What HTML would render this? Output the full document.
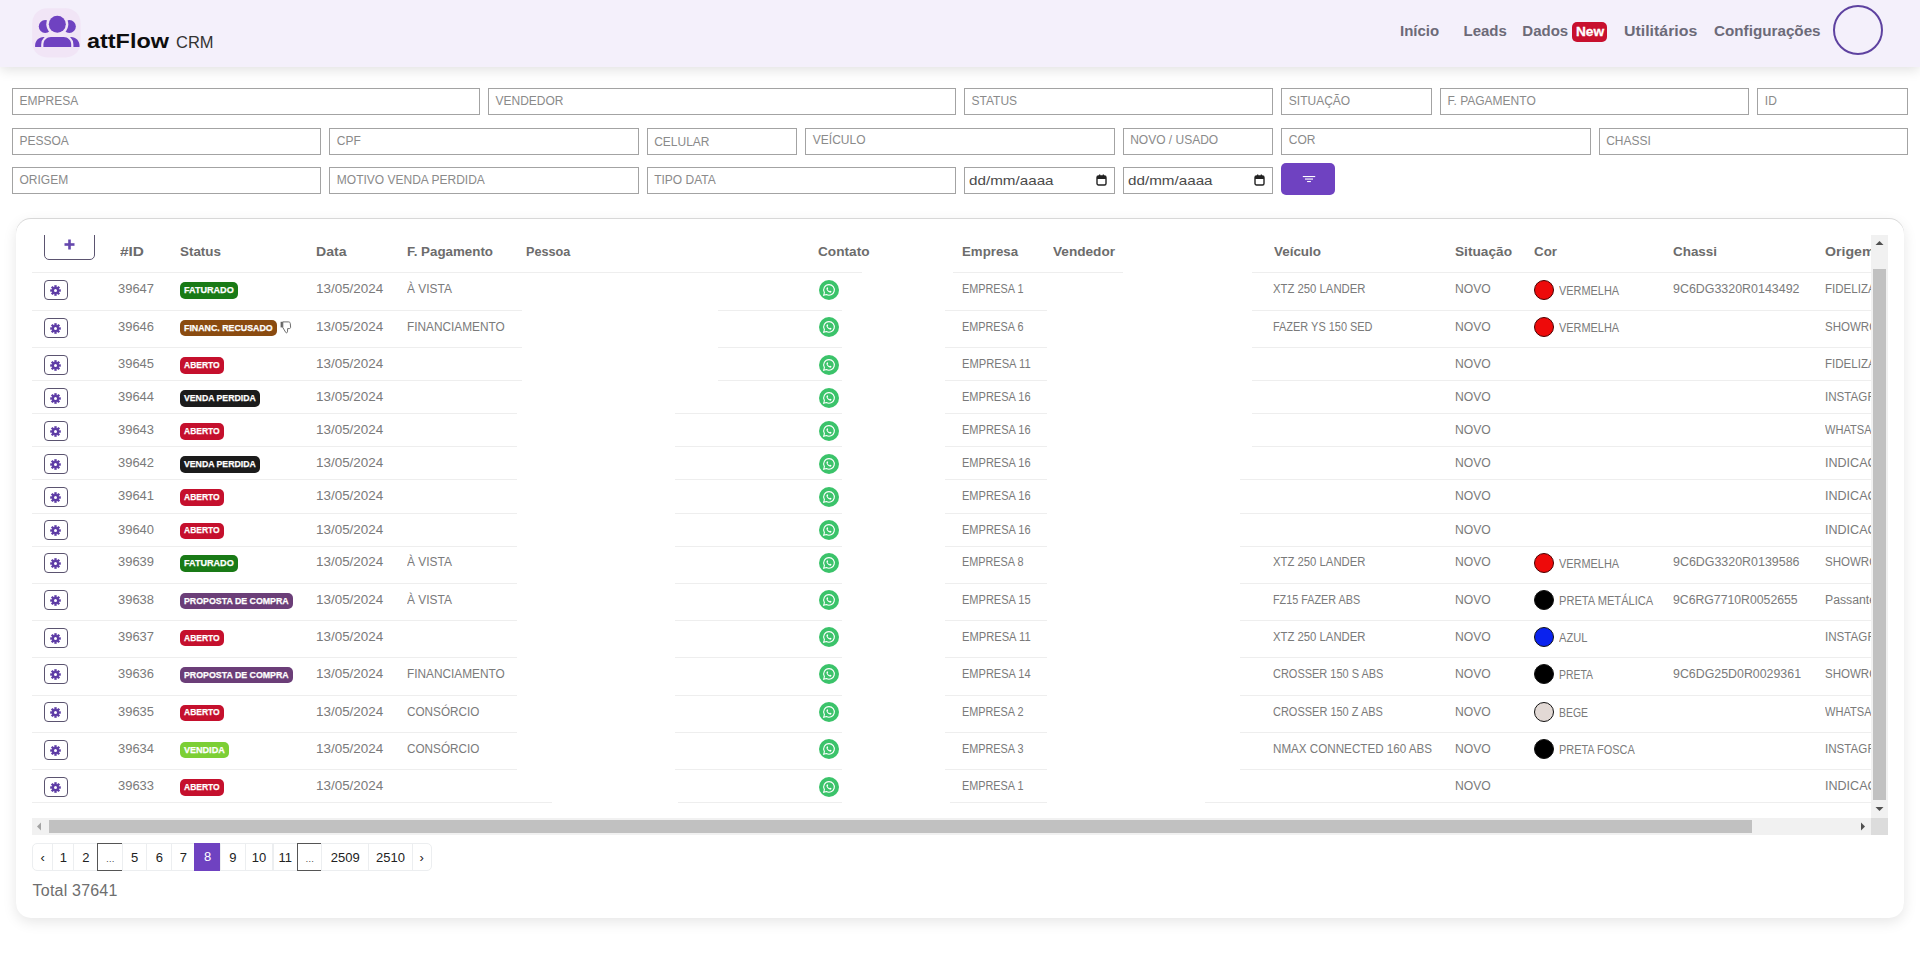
<!DOCTYPE html><html><head><meta charset="utf-8"><style>
*{box-sizing:border-box;margin:0;padding:0}
html,body{width:1920px;height:960px;overflow:hidden;background:#fff;font-family:"Liberation Sans", sans-serif;position:relative}
.t{position:absolute;white-space:nowrap;line-height:1}
.inp{position:absolute;border:1px solid #a3a3a3;background:#fff;height:27px}
.badge{position:absolute;height:17px;border-radius:4px;color:#fff;font-weight:bold;font-size:9px;line-height:17px;padding:0 5px;white-space:nowrap;letter-spacing:-0.2px}
.gear{position:absolute;width:24px;height:20px;border:1px solid #5b5470;border-radius:4px;background:#fff}
.wa{position:absolute;width:20px;height:20px;border-radius:50%;background:#3cc36b}
.dot{position:absolute;width:20px;height:20px;border-radius:50%;border:1px solid #222}
.pg{position:absolute;top:843px;height:28px;border:1px solid #eceef0;border-left:none;font-size:13px;color:#222;text-align:center;line-height:26px}
</style></head><body><div style="position:absolute;left:0px;top:0px;width:1920px;height:67px;background:#f4f0fb;box-shadow:0 3px 12px rgba(0,0,0,0.12)"></div>
<svg style="position:absolute;left:0;top:0" width="100" height="67" viewBox="0 0 100 67">
<rect x="32.2" y="8.2" width="48.4" height="49.3" rx="15" fill="#f1e5f6"/>
<g fill="#6f42c1"><circle cx="45.2" cy="26.45" r="6.45"/><circle cx="69.4" cy="26.45" r="6.45"/></g>
<circle cx="57.3" cy="24.35" r="11" fill="#f1e5f6"/>
<circle cx="57.3" cy="24.35" r="8.5" fill="#6f42c1"/>
<path d="M35.1 46.9 V45.5 C35.1 40.5 38.8 36.9 43.5 36.9 H71.1 C75.8 36.9 79.5 40.5 79.5 45.5 V46.9 Z" fill="#6f42c1"/>
<path d="M43.4 46.9 V44.5 C43.4 40.2 46.8 36.9 51 36.9 H63.6 C67.8 36.9 71.2 40.2 71.2 44.5 V46.9 Z" fill="none" stroke="#f1e5f6" stroke-width="4.4"/>
<path d="M43.4 46.9 V44.5 C43.4 40.2 46.8 36.9 51 36.9 H63.6 C67.8 36.9 71.2 40.2 71.2 44.5 V46.9 Z" fill="#6f42c1"/>
</svg>
<div class="t" style="left:87.20px;top:30.87px;font-size:20px;color:#0d0d0d;font-weight:bold;letter-spacing:0px;transform:scaleX(1.17);transform-origin:0 0;">attFlow</div>
<div class="t" style="left:175.50px;top:34.76px;font-size:16px;color:#333;font-weight:normal;letter-spacing:0px;transform:scaleX(1.03);transform-origin:0 0;">CRM</div>
<div class="t" style="left:1400.00px;top:23.30px;font-size:15px;color:#6c6a78;font-weight:bold;letter-spacing:0px;">Início</div>
<div class="t" style="left:1463.50px;top:23.30px;font-size:15px;color:#6c6a78;font-weight:bold;letter-spacing:0px;">Leads</div>
<div class="t" style="left:1522.30px;top:23.30px;font-size:15px;color:#6c6a78;font-weight:bold;letter-spacing:0px;">Dados</div>
<div style="position:absolute;left:1572px;top:22px;width:35px;height:19.5px;background:#c8102e;border-radius:5px"></div>
<div class="t" style="left:1575.50px;top:25.00px;font-size:13px;color:#fff;font-weight:bold;letter-spacing:0px;transform:scaleX(1.05);transform-origin:0 0;-webkit-text-stroke:0.3px #fff;">New</div>
<div class="t" style="left:1624.00px;top:23.30px;font-size:15px;color:#6c6a78;font-weight:bold;letter-spacing:0px;transform:scaleX(1.06);transform-origin:0 0;">Utilitários</div>
<div class="t" style="left:1713.50px;top:23.30px;font-size:15px;color:#6c6a78;font-weight:bold;letter-spacing:0px;transform:scaleX(1.015);transform-origin:0 0;">Configurações</div>
<div style="position:absolute;left:1833px;top:5px;width:50px;height:50px;border:2px solid #5e42a0;border-radius:50%"></div>
<div class="inp" style="left:12.00px;top:88px;width:468.00px"></div>
<div class="t" style="left:19.50px;top:94.84px;font-size:12px;color:#8a8a8a;font-weight:normal;letter-spacing:0px;">EMPRESA</div>
<div class="inp" style="left:488.00px;top:88px;width:468.00px"></div>
<div class="t" style="left:495.50px;top:94.84px;font-size:12px;color:#8a8a8a;font-weight:normal;letter-spacing:0px;">VENDEDOR</div>
<div class="inp" style="left:964.00px;top:88px;width:309.33px"></div>
<div class="t" style="left:971.50px;top:94.84px;font-size:12px;color:#8a8a8a;font-weight:normal;letter-spacing:0px;">STATUS</div>
<div class="inp" style="left:1281.33px;top:88px;width:150.67px"></div>
<div class="t" style="left:1288.83px;top:94.84px;font-size:12px;color:#8a8a8a;font-weight:normal;letter-spacing:0px;">SITUAÇÃO</div>
<div class="inp" style="left:1440.00px;top:88px;width:309.33px"></div>
<div class="t" style="left:1447.50px;top:94.84px;font-size:12px;color:#8a8a8a;font-weight:normal;letter-spacing:0px;">F. PAGAMENTO</div>
<div class="inp" style="left:1757.33px;top:88px;width:150.67px"></div>
<div class="t" style="left:1764.83px;top:95.34px;font-size:12px;color:#8a8a8a;font-weight:normal;letter-spacing:0px;">ID</div>
<div class="inp" style="left:12.00px;top:127.5px;width:309.33px"></div>
<div class="t" style="left:19.50px;top:135.34px;font-size:12px;color:#8a8a8a;font-weight:normal;letter-spacing:0px;">PESSOA</div>
<div class="inp" style="left:329.33px;top:127.5px;width:309.33px"></div>
<div class="t" style="left:336.83px;top:135.34px;font-size:12px;color:#8a8a8a;font-weight:normal;letter-spacing:0px;">CPF</div>
<div class="inp" style="left:646.67px;top:127.5px;width:150.67px"></div>
<div class="t" style="left:654.17px;top:135.84px;font-size:12px;color:#8a8a8a;font-weight:normal;letter-spacing:0px;">CELULAR</div>
<div class="inp" style="left:805.33px;top:127.5px;width:309.33px"></div>
<div class="t" style="left:812.83px;top:134.34px;font-size:12px;color:#8a8a8a;font-weight:normal;letter-spacing:0px;">VEÍCULO</div>
<div class="inp" style="left:1122.67px;top:127.5px;width:150.67px"></div>
<div class="t" style="left:1130.17px;top:134.34px;font-size:12px;color:#8a8a8a;font-weight:normal;letter-spacing:0px;">NOVO / USADO</div>
<div class="inp" style="left:1281.33px;top:127.5px;width:309.33px"></div>
<div class="t" style="left:1288.83px;top:134.34px;font-size:12px;color:#8a8a8a;font-weight:normal;letter-spacing:0px;">COR</div>
<div class="inp" style="left:1598.67px;top:127.5px;width:309.33px"></div>
<div class="t" style="left:1606.17px;top:135.34px;font-size:12px;color:#8a8a8a;font-weight:normal;letter-spacing:0px;">CHASSI</div>
<div class="inp" style="left:12.00px;top:167px;width:309.33px"></div>
<div class="t" style="left:19.50px;top:173.84px;font-size:12px;color:#8a8a8a;font-weight:normal;letter-spacing:0px;">ORIGEM</div>
<div class="inp" style="left:329.33px;top:167px;width:309.33px"></div>
<div class="t" style="left:336.83px;top:173.84px;font-size:12px;color:#8a8a8a;font-weight:normal;letter-spacing:0px;">MOTIVO VENDA PERDIDA</div>
<div class="inp" style="left:646.67px;top:167px;width:309.33px"></div>
<div class="t" style="left:654.17px;top:173.84px;font-size:12px;color:#8a8a8a;font-weight:normal;letter-spacing:0px;">TIPO DATA</div>
<div class="inp" style="left:964.00px;top:167px;width:150.67px"></div>
<div class="t" style="left:969.00px;top:173.80px;font-size:13px;color:#4a4a4a;font-weight:normal;letter-spacing:0px;transform:scaleX(1.17);transform-origin:0 0;">dd/mm/aaaa</div>
<svg style="position:absolute;left:1095.67px;top:174px" width="11" height="12" viewBox="0 0 11 12"><rect x="1" y="2" width="9" height="9" rx="1.5" fill="none" stroke="#222" stroke-width="1.4"/><rect x="1" y="2" width="9" height="3" fill="#222"/><rect x="3" y="0.5" width="1.3" height="2.5" fill="#222"/><rect x="6.7" y="0.5" width="1.3" height="2.5" fill="#222"/></svg>
<div class="inp" style="left:1122.67px;top:167px;width:150.67px"></div>
<div class="t" style="left:1127.67px;top:173.80px;font-size:13px;color:#4a4a4a;font-weight:normal;letter-spacing:0px;transform:scaleX(1.17);transform-origin:0 0;">dd/mm/aaaa</div>
<svg style="position:absolute;left:1254.33px;top:174px" width="11" height="12" viewBox="0 0 11 12"><rect x="1" y="2" width="9" height="9" rx="1.5" fill="none" stroke="#222" stroke-width="1.4"/><rect x="1" y="2" width="9" height="3" fill="#222"/><rect x="3" y="0.5" width="1.3" height="2.5" fill="#222"/><rect x="6.7" y="0.5" width="1.3" height="2.5" fill="#222"/></svg>
<div style="position:absolute;left:1281px;top:163px;width:54px;height:32px;background:#6f42c1;border-radius:5px"></div>
<svg style="position:absolute;left:1302px;top:175px" width="14" height="8" viewBox="0 0 14 8"><rect x="0.8" y="1" width="12.4" height="1.1" fill="#fff"/><rect x="3" y="3.5" width="8" height="1.1" fill="#fff"/><rect x="5.1" y="6" width="3.8" height="1.1" fill="#fff"/></svg>
<div style="position:absolute;left:16px;top:219px;width:1888px;height:699px;background:#fff;border-radius:15px;box-shadow:0 -1px 0 #d8d8d8, 0 4px 14px rgba(0,0,0,0.10)"></div>
<div style="position:absolute;left:32px;top:235px;width:1839px;height:583px;overflow:hidden">
<div style="position:absolute;left:12px;top:-8px;width:51px;height:33px;border:1px solid #5b5470;border-radius:5px"></div>
<svg style="position:absolute;left:31.5px;top:3.5px" width="11" height="11" viewBox="0 0 11 11"><rect x="0.5" y="4.2" width="10" height="2.6" fill="#6548ad"/><rect x="4.2" y="0.5" width="2.6" height="10" fill="#6548ad"/></svg>
<div class="t" style="left:87.80px;top:10.84px;font-size:12px;color:#6c6c6c;font-weight:bold;letter-spacing:0px;transform:scaleX(1.2852);transform-origin:0 0;">#ID</div>
<div class="t" style="left:147.60px;top:10.84px;font-size:12px;color:#6c6c6c;font-weight:bold;letter-spacing:0px;transform:scaleX(1.1152);transform-origin:0 0;">Status</div>
<div class="t" style="left:284.20px;top:10.84px;font-size:12px;color:#6c6c6c;font-weight:bold;letter-spacing:0px;transform:scaleX(1.1726);transform-origin:0 0;">Data</div>
<div class="t" style="left:374.50px;top:10.84px;font-size:12px;color:#6c6c6c;font-weight:bold;letter-spacing:0px;transform:scaleX(1.1118);transform-origin:0 0;">F. Pagamento</div>
<div class="t" style="left:493.70px;top:10.84px;font-size:12px;color:#6c6c6c;font-weight:bold;letter-spacing:0px;transform:scaleX(1.0540);transform-origin:0 0;">Pessoa</div>
<div class="t" style="left:786.00px;top:10.84px;font-size:12px;color:#6c6c6c;font-weight:bold;letter-spacing:0px;transform:scaleX(1.1363);transform-origin:0 0;">Contato</div>
<div class="t" style="left:929.50px;top:10.84px;font-size:12px;color:#6c6c6c;font-weight:bold;letter-spacing:0px;transform:scaleX(1.1046);transform-origin:0 0;">Empresa</div>
<div class="t" style="left:1020.50px;top:10.84px;font-size:12px;color:#6c6c6c;font-weight:bold;letter-spacing:0px;transform:scaleX(1.1338);transform-origin:0 0;">Vendedor</div>
<div class="t" style="left:1241.50px;top:10.84px;font-size:12px;color:#6c6c6c;font-weight:bold;letter-spacing:0px;transform:scaleX(1.1185);transform-origin:0 0;">Veículo</div>
<div class="t" style="left:1422.50px;top:10.84px;font-size:12px;color:#6c6c6c;font-weight:bold;letter-spacing:0px;transform:scaleX(1.1396);transform-origin:0 0;">Situação</div>
<div class="t" style="left:1501.50px;top:10.84px;font-size:12px;color:#6c6c6c;font-weight:bold;letter-spacing:0px;transform:scaleX(1.1129);transform-origin:0 0;">Cor</div>
<div class="t" style="left:1640.50px;top:10.84px;font-size:12px;color:#6c6c6c;font-weight:bold;letter-spacing:0px;transform:scaleX(1.1181);transform-origin:0 0;">Chassi</div>
<div class="t" style="left:1792.50px;top:10.84px;font-size:12px;color:#6c6c6c;font-weight:bold;letter-spacing:0px;transform:scaleX(1.1783);transform-origin:0 0;">Origem</div>
<div style="position:absolute;left:0px;top:37px;width:830px;height:1px;background:#eeeeee"></div>
<div style="position:absolute;left:921px;top:37px;width:170px;height:1px;background:#eeeeee"></div>
<div style="position:absolute;left:1220px;top:37px;width:619px;height:1px;background:#eeeeee"></div>
<div style="position:absolute;left:0px;top:75px;width:490px;height:1px;background:#eeeeee"></div>
<div style="position:absolute;left:686px;top:75px;width:124px;height:1px;background:#eeeeee"></div>
<div style="position:absolute;left:913px;top:75px;width:102px;height:1px;background:#eeeeee"></div>
<div style="position:absolute;left:1220px;top:75px;width:619px;height:1px;background:#eeeeee"></div>
<div style="position:absolute;left:0px;top:112px;width:490px;height:1px;background:#eeeeee"></div>
<div style="position:absolute;left:686px;top:112px;width:124px;height:1px;background:#eeeeee"></div>
<div style="position:absolute;left:913px;top:112px;width:102px;height:1px;background:#eeeeee"></div>
<div style="position:absolute;left:1220px;top:112px;width:619px;height:1px;background:#eeeeee"></div>
<div style="position:absolute;left:0px;top:145px;width:490px;height:1px;background:#eeeeee"></div>
<div style="position:absolute;left:686px;top:145px;width:124px;height:1px;background:#eeeeee"></div>
<div style="position:absolute;left:913px;top:145px;width:102px;height:1px;background:#eeeeee"></div>
<div style="position:absolute;left:1220px;top:145px;width:619px;height:1px;background:#eeeeee"></div>
<div style="position:absolute;left:0px;top:178px;width:485px;height:1px;background:#eeeeee"></div>
<div style="position:absolute;left:643px;top:178px;width:167px;height:1px;background:#eeeeee"></div>
<div style="position:absolute;left:913px;top:178px;width:102px;height:1px;background:#eeeeee"></div>
<div style="position:absolute;left:1220px;top:178px;width:619px;height:1px;background:#eeeeee"></div>
<div style="position:absolute;left:0px;top:211px;width:485px;height:1px;background:#eeeeee"></div>
<div style="position:absolute;left:643px;top:211px;width:167px;height:1px;background:#eeeeee"></div>
<div style="position:absolute;left:913px;top:211px;width:102px;height:1px;background:#eeeeee"></div>
<div style="position:absolute;left:1220px;top:211px;width:619px;height:1px;background:#eeeeee"></div>
<div style="position:absolute;left:0px;top:244px;width:485px;height:1px;background:#eeeeee"></div>
<div style="position:absolute;left:643px;top:244px;width:167px;height:1px;background:#eeeeee"></div>
<div style="position:absolute;left:913px;top:244px;width:102px;height:1px;background:#eeeeee"></div>
<div style="position:absolute;left:1208px;top:244px;width:631px;height:1px;background:#eeeeee"></div>
<div style="position:absolute;left:0px;top:278px;width:485px;height:1px;background:#eeeeee"></div>
<div style="position:absolute;left:643px;top:278px;width:167px;height:1px;background:#eeeeee"></div>
<div style="position:absolute;left:913px;top:278px;width:102px;height:1px;background:#eeeeee"></div>
<div style="position:absolute;left:1208px;top:278px;width:631px;height:1px;background:#eeeeee"></div>
<div style="position:absolute;left:0px;top:311px;width:485px;height:1px;background:#eeeeee"></div>
<div style="position:absolute;left:643px;top:311px;width:167px;height:1px;background:#eeeeee"></div>
<div style="position:absolute;left:913px;top:311px;width:102px;height:1px;background:#eeeeee"></div>
<div style="position:absolute;left:1208px;top:311px;width:631px;height:1px;background:#eeeeee"></div>
<div style="position:absolute;left:0px;top:348px;width:485px;height:1px;background:#eeeeee"></div>
<div style="position:absolute;left:643px;top:348px;width:167px;height:1px;background:#eeeeee"></div>
<div style="position:absolute;left:913px;top:348px;width:102px;height:1px;background:#eeeeee"></div>
<div style="position:absolute;left:1208px;top:348px;width:631px;height:1px;background:#eeeeee"></div>
<div style="position:absolute;left:0px;top:385px;width:485px;height:1px;background:#eeeeee"></div>
<div style="position:absolute;left:643px;top:385px;width:167px;height:1px;background:#eeeeee"></div>
<div style="position:absolute;left:913px;top:385px;width:102px;height:1px;background:#eeeeee"></div>
<div style="position:absolute;left:1208px;top:385px;width:631px;height:1px;background:#eeeeee"></div>
<div style="position:absolute;left:0px;top:422px;width:485px;height:1px;background:#eeeeee"></div>
<div style="position:absolute;left:643px;top:422px;width:167px;height:1px;background:#eeeeee"></div>
<div style="position:absolute;left:913px;top:422px;width:102px;height:1px;background:#eeeeee"></div>
<div style="position:absolute;left:1208px;top:422px;width:631px;height:1px;background:#eeeeee"></div>
<div style="position:absolute;left:0px;top:460px;width:485px;height:1px;background:#eeeeee"></div>
<div style="position:absolute;left:643px;top:460px;width:167px;height:1px;background:#eeeeee"></div>
<div style="position:absolute;left:913px;top:460px;width:102px;height:1px;background:#eeeeee"></div>
<div style="position:absolute;left:1208px;top:460px;width:631px;height:1px;background:#eeeeee"></div>
<div style="position:absolute;left:0px;top:497px;width:485px;height:1px;background:#eeeeee"></div>
<div style="position:absolute;left:643px;top:497px;width:167px;height:1px;background:#eeeeee"></div>
<div style="position:absolute;left:913px;top:497px;width:102px;height:1px;background:#eeeeee"></div>
<div style="position:absolute;left:1208px;top:497px;width:631px;height:1px;background:#eeeeee"></div>
<div style="position:absolute;left:0px;top:534px;width:485px;height:1px;background:#eeeeee"></div>
<div style="position:absolute;left:643px;top:534px;width:167px;height:1px;background:#eeeeee"></div>
<div style="position:absolute;left:913px;top:534px;width:102px;height:1px;background:#eeeeee"></div>
<div style="position:absolute;left:1208px;top:534px;width:631px;height:1px;background:#eeeeee"></div>
<div style="position:absolute;left:0px;top:567px;width:520px;height:1px;background:#eeeeee"></div>
<div style="position:absolute;left:646px;top:567px;width:164px;height:1px;background:#eeeeee"></div>
<div style="position:absolute;left:918px;top:567px;width:97px;height:1px;background:#eeeeee"></div>
<div style="position:absolute;left:1173px;top:567px;width:666px;height:1px;background:#eeeeee"></div>
<div style="position:absolute;left:12px;top:45px;width:24px;height:20px;border:1px solid #5b5470;border-radius:4px"></div>
<svg style="position:absolute;left:17.5px;top:49.5px" width="11" height="11" viewBox="-5.5 -5.5 11 11"><g fill="#5e3da6"><circle r="3.6"/><rect x="-1.2" y="-5.3" width="2.4" height="3" transform="rotate(0)"/><rect x="-1.2" y="-5.3" width="2.4" height="3" transform="rotate(45)"/><rect x="-1.2" y="-5.3" width="2.4" height="3" transform="rotate(90)"/><rect x="-1.2" y="-5.3" width="2.4" height="3" transform="rotate(135)"/><rect x="-1.2" y="-5.3" width="2.4" height="3" transform="rotate(180)"/><rect x="-1.2" y="-5.3" width="2.4" height="3" transform="rotate(225)"/><rect x="-1.2" y="-5.3" width="2.4" height="3" transform="rotate(270)"/><rect x="-1.2" y="-5.3" width="2.4" height="3" transform="rotate(315)"/></g><circle r="1.5" fill="#fff"/></svg>
<div class="t" style="left:86.40px;top:47.84px;font-size:12px;color:#7a7a7a;font-weight:normal;letter-spacing:0px;transform:scaleX(1.0800);transform-origin:0 0;">39647</div>
<div style="position:absolute;left:148px;top:47.3px;width:58px;height:16.5px;background:#197a16;border-radius:5px"></div>
<div class="t" style="left:152.30px;top:50.16px;font-size:9.5px;color:#fff;font-weight:bold;letter-spacing:0px;transform:scaleX(0.9545);transform-origin:0 0;-webkit-text-stroke:0.25px #fff;">FATURADO</div>
<div class="t" style="left:284.20px;top:47.84px;font-size:12px;color:#7a7a7a;font-weight:normal;letter-spacing:0px;transform:scaleX(1.1192);transform-origin:0 0;">13/05/2024</div>
<div class="t" style="left:374.50px;top:47.84px;font-size:12px;color:#7a7a7a;font-weight:normal;letter-spacing:0px;transform:scaleX(0.9940);transform-origin:0 0;">À VISTA</div>
<svg style="position:absolute;left:787px;top:44.80000000000001px" width="20" height="20" viewBox="0 0 20 20"><circle cx="10" cy="10" r="10" fill="#3bc36a"/><path d="M10 4.6a5.3 5.3 0 0 0-4.6 8l-.7 2.6 2.7-.7A5.3 5.3 0 1 0 10 4.6z" fill="none" stroke="#fff" stroke-width="1.1"/><path d="M8.1 7.3c.2-.1.5 0 .6.2l.4 1c.1.2 0 .4-.2.6l-.3.3c.4.8 1 1.4 1.8 1.8l.3-.3c.2-.2.4-.2.6-.1l1 .4c.2.1.3.4.2.6-.3.7-1 1-1.7.8-1.6-.5-2.8-1.7-3.3-3.3-.2-.7.1-1.4.6-2z" fill="#fff"/></svg>
<div class="t" style="left:929.50px;top:47.84px;font-size:12px;color:#7a7a7a;font-weight:normal;letter-spacing:0px;transform:scaleX(0.9040);transform-origin:0 0;">EMPRESA 1</div>
<div class="t" style="left:1241.00px;top:47.84px;font-size:12px;color:#7a7a7a;font-weight:normal;letter-spacing:0px;transform:scaleX(0.9433);transform-origin:0 0;">XTZ 250 LANDER</div>
<div class="t" style="left:1422.50px;top:47.84px;font-size:12px;color:#7a7a7a;font-weight:normal;letter-spacing:0px;transform:scaleX(1.0141);transform-origin:0 0;">NOVO</div>
<div style="position:absolute;left:1502px;top:44.8px;width:20px;height:20px;background:#ee0a0a;border:1px solid #4a0000;border-radius:50%"></div>
<div class="t" style="left:1527.00px;top:49.84px;font-size:12px;color:#7a7a7a;font-weight:normal;letter-spacing:0px;transform:scaleX(0.9102);transform-origin:0 0;">VERMELHA</div>
<div class="t" style="left:1640.50px;top:47.84px;font-size:12px;color:#7a7a7a;font-weight:normal;letter-spacing:0px;transform:scaleX(1.0357);transform-origin:0 0;">9C6DG3320R0143492</div>
<div class="t" style="left:1792.50px;top:47.84px;font-size:12px;color:#7a7a7a;font-weight:normal;letter-spacing:0px;transform:scaleX(0.9621);transform-origin:0 0;">FIDELIZAÇÃO</div>
<div style="position:absolute;left:12px;top:83px;width:24px;height:20px;border:1px solid #5b5470;border-radius:4px"></div>
<svg style="position:absolute;left:17.5px;top:87.5px" width="11" height="11" viewBox="-5.5 -5.5 11 11"><g fill="#5e3da6"><circle r="3.6"/><rect x="-1.2" y="-5.3" width="2.4" height="3" transform="rotate(0)"/><rect x="-1.2" y="-5.3" width="2.4" height="3" transform="rotate(45)"/><rect x="-1.2" y="-5.3" width="2.4" height="3" transform="rotate(90)"/><rect x="-1.2" y="-5.3" width="2.4" height="3" transform="rotate(135)"/><rect x="-1.2" y="-5.3" width="2.4" height="3" transform="rotate(180)"/><rect x="-1.2" y="-5.3" width="2.4" height="3" transform="rotate(225)"/><rect x="-1.2" y="-5.3" width="2.4" height="3" transform="rotate(270)"/><rect x="-1.2" y="-5.3" width="2.4" height="3" transform="rotate(315)"/></g><circle r="1.5" fill="#fff"/></svg>
<div class="t" style="left:86.40px;top:85.94px;font-size:12px;color:#7a7a7a;font-weight:normal;letter-spacing:0px;transform:scaleX(1.0800);transform-origin:0 0;">39646</div>
<div style="position:absolute;left:148px;top:84.8px;width:97px;height:16.5px;background:#8a4b10;border-radius:5px"></div>
<div class="t" style="left:152.30px;top:87.66px;font-size:9.5px;color:#fff;font-weight:bold;letter-spacing:0px;transform:scaleX(0.9285);transform-origin:0 0;-webkit-text-stroke:0.25px #fff;">FINANC. RECUSADO</div>
<svg style="position:absolute;left:248px;top:86px" width="12" height="13" viewBox="0 0 12 13"><rect x="0.6" y="0.8" width="2.2" height="5.6" fill="#666"/><path d="M2.8 0.9 H8.6 C9.6 0.9 10.3 1.6 10.3 2.6 L10.6 6.2 C10.6 7.1 10 7.6 9.1 7.6 H7.6 L7.5 10.8 C7.4 11.7 6.5 12.1 5.8 11.5 L2.8 6.5 Z" fill="none" stroke="#666" stroke-width="0.95" stroke-linejoin="round"/></svg>
<div class="t" style="left:284.20px;top:85.94px;font-size:12px;color:#7a7a7a;font-weight:normal;letter-spacing:0px;transform:scaleX(1.1192);transform-origin:0 0;">13/05/2024</div>
<div class="t" style="left:374.50px;top:85.94px;font-size:12px;color:#7a7a7a;font-weight:normal;letter-spacing:0px;transform:scaleX(0.9859);transform-origin:0 0;">FINANCIAMENTO</div>
<svg style="position:absolute;left:787px;top:82.30000000000001px" width="20" height="20" viewBox="0 0 20 20"><circle cx="10" cy="10" r="10" fill="#3bc36a"/><path d="M10 4.6a5.3 5.3 0 0 0-4.6 8l-.7 2.6 2.7-.7A5.3 5.3 0 1 0 10 4.6z" fill="none" stroke="#fff" stroke-width="1.1"/><path d="M8.1 7.3c.2-.1.5 0 .6.2l.4 1c.1.2 0 .4-.2.6l-.3.3c.4.8 1 1.4 1.8 1.8l.3-.3c.2-.2.4-.2.6-.1l1 .4c.2.1.3.4.2.6-.3.7-1 1-1.7.8-1.6-.5-2.8-1.7-3.3-3.3-.2-.7.1-1.4.6-2z" fill="#fff"/></svg>
<div class="t" style="left:929.50px;top:85.94px;font-size:12px;color:#7a7a7a;font-weight:normal;letter-spacing:0px;transform:scaleX(0.9040);transform-origin:0 0;">EMPRESA 6</div>
<div class="t" style="left:1241.00px;top:85.94px;font-size:12px;color:#7a7a7a;font-weight:normal;letter-spacing:0px;transform:scaleX(0.9114);transform-origin:0 0;">FAZER YS 150 SED</div>
<div class="t" style="left:1422.50px;top:85.94px;font-size:12px;color:#7a7a7a;font-weight:normal;letter-spacing:0px;transform:scaleX(1.0141);transform-origin:0 0;">NOVO</div>
<div style="position:absolute;left:1502px;top:82.3px;width:20px;height:20px;background:#ee0a0a;border:1px solid #4a0000;border-radius:50%"></div>
<div class="t" style="left:1527.00px;top:87.34px;font-size:12px;color:#7a7a7a;font-weight:normal;letter-spacing:0px;transform:scaleX(0.9102);transform-origin:0 0;">VERMELHA</div>
<div class="t" style="left:1792.50px;top:85.94px;font-size:12px;color:#7a7a7a;font-weight:normal;letter-spacing:0px;transform:scaleX(0.9609);transform-origin:0 0;">SHOWROOM</div>
<div style="position:absolute;left:12px;top:120px;width:24px;height:20px;border:1px solid #5b5470;border-radius:4px"></div>
<svg style="position:absolute;left:17.5px;top:124.5px" width="11" height="11" viewBox="-5.5 -5.5 11 11"><g fill="#5e3da6"><circle r="3.6"/><rect x="-1.2" y="-5.3" width="2.4" height="3" transform="rotate(0)"/><rect x="-1.2" y="-5.3" width="2.4" height="3" transform="rotate(45)"/><rect x="-1.2" y="-5.3" width="2.4" height="3" transform="rotate(90)"/><rect x="-1.2" y="-5.3" width="2.4" height="3" transform="rotate(135)"/><rect x="-1.2" y="-5.3" width="2.4" height="3" transform="rotate(180)"/><rect x="-1.2" y="-5.3" width="2.4" height="3" transform="rotate(225)"/><rect x="-1.2" y="-5.3" width="2.4" height="3" transform="rotate(270)"/><rect x="-1.2" y="-5.3" width="2.4" height="3" transform="rotate(315)"/></g><circle r="1.5" fill="#fff"/></svg>
<div class="t" style="left:86.40px;top:123.24px;font-size:12px;color:#7a7a7a;font-weight:normal;letter-spacing:0px;transform:scaleX(1.0800);transform-origin:0 0;">39645</div>
<div style="position:absolute;left:148px;top:122.1px;width:44px;height:16.5px;background:#c5102d;border-radius:5px"></div>
<div class="t" style="left:152.30px;top:124.96px;font-size:9.5px;color:#fff;font-weight:bold;letter-spacing:0px;transform:scaleX(0.8938);transform-origin:0 0;-webkit-text-stroke:0.25px #fff;">ABERTO</div>
<div class="t" style="left:284.20px;top:123.24px;font-size:12px;color:#7a7a7a;font-weight:normal;letter-spacing:0px;transform:scaleX(1.1192);transform-origin:0 0;">13/05/2024</div>
<svg style="position:absolute;left:787px;top:119.60000000000002px" width="20" height="20" viewBox="0 0 20 20"><circle cx="10" cy="10" r="10" fill="#3bc36a"/><path d="M10 4.6a5.3 5.3 0 0 0-4.6 8l-.7 2.6 2.7-.7A5.3 5.3 0 1 0 10 4.6z" fill="none" stroke="#fff" stroke-width="1.1"/><path d="M8.1 7.3c.2-.1.5 0 .6.2l.4 1c.1.2 0 .4-.2.6l-.3.3c.4.8 1 1.4 1.8 1.8l.3-.3c.2-.2.4-.2.6-.1l1 .4c.2.1.3.4.2.6-.3.7-1 1-1.7.8-1.6-.5-2.8-1.7-3.3-3.3-.2-.7.1-1.4.6-2z" fill="#fff"/></svg>
<div class="t" style="left:929.50px;top:123.24px;font-size:12px;color:#7a7a7a;font-weight:normal;letter-spacing:0px;transform:scaleX(0.9295);transform-origin:0 0;">EMPRESA 11</div>
<div class="t" style="left:1422.50px;top:123.24px;font-size:12px;color:#7a7a7a;font-weight:normal;letter-spacing:0px;transform:scaleX(1.0141);transform-origin:0 0;">NOVO</div>
<div class="t" style="left:1792.50px;top:123.24px;font-size:12px;color:#7a7a7a;font-weight:normal;letter-spacing:0px;transform:scaleX(0.9621);transform-origin:0 0;">FIDELIZAÇÃO</div>
<div style="position:absolute;left:12px;top:153px;width:24px;height:20px;border:1px solid #5b5470;border-radius:4px"></div>
<svg style="position:absolute;left:17.5px;top:157.5px" width="11" height="11" viewBox="-5.5 -5.5 11 11"><g fill="#5e3da6"><circle r="3.6"/><rect x="-1.2" y="-5.3" width="2.4" height="3" transform="rotate(0)"/><rect x="-1.2" y="-5.3" width="2.4" height="3" transform="rotate(45)"/><rect x="-1.2" y="-5.3" width="2.4" height="3" transform="rotate(90)"/><rect x="-1.2" y="-5.3" width="2.4" height="3" transform="rotate(135)"/><rect x="-1.2" y="-5.3" width="2.4" height="3" transform="rotate(180)"/><rect x="-1.2" y="-5.3" width="2.4" height="3" transform="rotate(225)"/><rect x="-1.2" y="-5.3" width="2.4" height="3" transform="rotate(270)"/><rect x="-1.2" y="-5.3" width="2.4" height="3" transform="rotate(315)"/></g><circle r="1.5" fill="#fff"/></svg>
<div class="t" style="left:86.40px;top:156.44px;font-size:12px;color:#7a7a7a;font-weight:normal;letter-spacing:0px;transform:scaleX(1.0800);transform-origin:0 0;">39644</div>
<div style="position:absolute;left:148px;top:155.3px;width:80px;height:16.5px;background:#1b1b1b;border-radius:5px"></div>
<div class="t" style="left:152.30px;top:158.16px;font-size:9.5px;color:#fff;font-weight:bold;letter-spacing:0px;transform:scaleX(0.9157);transform-origin:0 0;-webkit-text-stroke:0.25px #fff;">VENDA PERDIDA</div>
<div class="t" style="left:284.20px;top:156.44px;font-size:12px;color:#7a7a7a;font-weight:normal;letter-spacing:0px;transform:scaleX(1.1192);transform-origin:0 0;">13/05/2024</div>
<svg style="position:absolute;left:787px;top:152.8px" width="20" height="20" viewBox="0 0 20 20"><circle cx="10" cy="10" r="10" fill="#3bc36a"/><path d="M10 4.6a5.3 5.3 0 0 0-4.6 8l-.7 2.6 2.7-.7A5.3 5.3 0 1 0 10 4.6z" fill="none" stroke="#fff" stroke-width="1.1"/><path d="M8.1 7.3c.2-.1.5 0 .6.2l.4 1c.1.2 0 .4-.2.6l-.3.3c.4.8 1 1.4 1.8 1.8l.3-.3c.2-.2.4-.2.6-.1l1 .4c.2.1.3.4.2.6-.3.7-1 1-1.7.8-1.6-.5-2.8-1.7-3.3-3.3-.2-.7.1-1.4.6-2z" fill="#fff"/></svg>
<div class="t" style="left:929.50px;top:156.44px;font-size:12px;color:#7a7a7a;font-weight:normal;letter-spacing:0px;transform:scaleX(0.9184);transform-origin:0 0;">EMPRESA 16</div>
<div class="t" style="left:1422.50px;top:156.44px;font-size:12px;color:#7a7a7a;font-weight:normal;letter-spacing:0px;transform:scaleX(1.0141);transform-origin:0 0;">NOVO</div>
<div class="t" style="left:1792.50px;top:156.44px;font-size:12px;color:#7a7a7a;font-weight:normal;letter-spacing:0px;transform:scaleX(0.9679);transform-origin:0 0;">INSTAGRAM</div>
<div style="position:absolute;left:12px;top:186px;width:24px;height:20px;border:1px solid #5b5470;border-radius:4px"></div>
<svg style="position:absolute;left:17.5px;top:190.5px" width="11" height="11" viewBox="-5.5 -5.5 11 11"><g fill="#5e3da6"><circle r="3.6"/><rect x="-1.2" y="-5.3" width="2.4" height="3" transform="rotate(0)"/><rect x="-1.2" y="-5.3" width="2.4" height="3" transform="rotate(45)"/><rect x="-1.2" y="-5.3" width="2.4" height="3" transform="rotate(90)"/><rect x="-1.2" y="-5.3" width="2.4" height="3" transform="rotate(135)"/><rect x="-1.2" y="-5.3" width="2.4" height="3" transform="rotate(180)"/><rect x="-1.2" y="-5.3" width="2.4" height="3" transform="rotate(225)"/><rect x="-1.2" y="-5.3" width="2.4" height="3" transform="rotate(270)"/><rect x="-1.2" y="-5.3" width="2.4" height="3" transform="rotate(315)"/></g><circle r="1.5" fill="#fff"/></svg>
<div class="t" style="left:86.40px;top:189.24px;font-size:12px;color:#7a7a7a;font-weight:normal;letter-spacing:0px;transform:scaleX(1.0800);transform-origin:0 0;">39643</div>
<div style="position:absolute;left:148px;top:188.1px;width:44px;height:16.5px;background:#c5102d;border-radius:5px"></div>
<div class="t" style="left:152.30px;top:190.96px;font-size:9.5px;color:#fff;font-weight:bold;letter-spacing:0px;transform:scaleX(0.8938);transform-origin:0 0;-webkit-text-stroke:0.25px #fff;">ABERTO</div>
<div class="t" style="left:284.20px;top:189.24px;font-size:12px;color:#7a7a7a;font-weight:normal;letter-spacing:0px;transform:scaleX(1.1192);transform-origin:0 0;">13/05/2024</div>
<svg style="position:absolute;left:787px;top:185.60000000000002px" width="20" height="20" viewBox="0 0 20 20"><circle cx="10" cy="10" r="10" fill="#3bc36a"/><path d="M10 4.6a5.3 5.3 0 0 0-4.6 8l-.7 2.6 2.7-.7A5.3 5.3 0 1 0 10 4.6z" fill="none" stroke="#fff" stroke-width="1.1"/><path d="M8.1 7.3c.2-.1.5 0 .6.2l.4 1c.1.2 0 .4-.2.6l-.3.3c.4.8 1 1.4 1.8 1.8l.3-.3c.2-.2.4-.2.6-.1l1 .4c.2.1.3.4.2.6-.3.7-1 1-1.7.8-1.6-.5-2.8-1.7-3.3-3.3-.2-.7.1-1.4.6-2z" fill="#fff"/></svg>
<div class="t" style="left:929.50px;top:189.24px;font-size:12px;color:#7a7a7a;font-weight:normal;letter-spacing:0px;transform:scaleX(0.9184);transform-origin:0 0;">EMPRESA 16</div>
<div class="t" style="left:1422.50px;top:189.24px;font-size:12px;color:#7a7a7a;font-weight:normal;letter-spacing:0px;transform:scaleX(1.0141);transform-origin:0 0;">NOVO</div>
<div class="t" style="left:1792.50px;top:189.24px;font-size:12px;color:#7a7a7a;font-weight:normal;letter-spacing:0px;transform:scaleX(0.9242);transform-origin:0 0;">WHATSAPP</div>
<div style="position:absolute;left:12px;top:219px;width:24px;height:20px;border:1px solid #5b5470;border-radius:4px"></div>
<svg style="position:absolute;left:17.5px;top:223.5px" width="11" height="11" viewBox="-5.5 -5.5 11 11"><g fill="#5e3da6"><circle r="3.6"/><rect x="-1.2" y="-5.3" width="2.4" height="3" transform="rotate(0)"/><rect x="-1.2" y="-5.3" width="2.4" height="3" transform="rotate(45)"/><rect x="-1.2" y="-5.3" width="2.4" height="3" transform="rotate(90)"/><rect x="-1.2" y="-5.3" width="2.4" height="3" transform="rotate(135)"/><rect x="-1.2" y="-5.3" width="2.4" height="3" transform="rotate(180)"/><rect x="-1.2" y="-5.3" width="2.4" height="3" transform="rotate(225)"/><rect x="-1.2" y="-5.3" width="2.4" height="3" transform="rotate(270)"/><rect x="-1.2" y="-5.3" width="2.4" height="3" transform="rotate(315)"/></g><circle r="1.5" fill="#fff"/></svg>
<div class="t" style="left:86.40px;top:222.24px;font-size:12px;color:#7a7a7a;font-weight:normal;letter-spacing:0px;transform:scaleX(1.0800);transform-origin:0 0;">39642</div>
<div style="position:absolute;left:148px;top:221.1px;width:80px;height:16.5px;background:#1b1b1b;border-radius:5px"></div>
<div class="t" style="left:152.30px;top:223.96px;font-size:9.5px;color:#fff;font-weight:bold;letter-spacing:0px;transform:scaleX(0.9157);transform-origin:0 0;-webkit-text-stroke:0.25px #fff;">VENDA PERDIDA</div>
<div class="t" style="left:284.20px;top:222.24px;font-size:12px;color:#7a7a7a;font-weight:normal;letter-spacing:0px;transform:scaleX(1.1192);transform-origin:0 0;">13/05/2024</div>
<svg style="position:absolute;left:787px;top:218.60000000000002px" width="20" height="20" viewBox="0 0 20 20"><circle cx="10" cy="10" r="10" fill="#3bc36a"/><path d="M10 4.6a5.3 5.3 0 0 0-4.6 8l-.7 2.6 2.7-.7A5.3 5.3 0 1 0 10 4.6z" fill="none" stroke="#fff" stroke-width="1.1"/><path d="M8.1 7.3c.2-.1.5 0 .6.2l.4 1c.1.2 0 .4-.2.6l-.3.3c.4.8 1 1.4 1.8 1.8l.3-.3c.2-.2.4-.2.6-.1l1 .4c.2.1.3.4.2.6-.3.7-1 1-1.7.8-1.6-.5-2.8-1.7-3.3-3.3-.2-.7.1-1.4.6-2z" fill="#fff"/></svg>
<div class="t" style="left:929.50px;top:222.24px;font-size:12px;color:#7a7a7a;font-weight:normal;letter-spacing:0px;transform:scaleX(0.9184);transform-origin:0 0;">EMPRESA 16</div>
<div class="t" style="left:1422.50px;top:222.24px;font-size:12px;color:#7a7a7a;font-weight:normal;letter-spacing:0px;transform:scaleX(1.0141);transform-origin:0 0;">NOVO</div>
<div class="t" style="left:1792.50px;top:222.24px;font-size:12px;color:#7a7a7a;font-weight:normal;letter-spacing:0px;transform:scaleX(1.0455);transform-origin:0 0;">INDICAÇÃO</div>
<div style="position:absolute;left:12px;top:252px;width:24px;height:20px;border:1px solid #5b5470;border-radius:4px"></div>
<svg style="position:absolute;left:17.5px;top:256.5px" width="11" height="11" viewBox="-5.5 -5.5 11 11"><g fill="#5e3da6"><circle r="3.6"/><rect x="-1.2" y="-5.3" width="2.4" height="3" transform="rotate(0)"/><rect x="-1.2" y="-5.3" width="2.4" height="3" transform="rotate(45)"/><rect x="-1.2" y="-5.3" width="2.4" height="3" transform="rotate(90)"/><rect x="-1.2" y="-5.3" width="2.4" height="3" transform="rotate(135)"/><rect x="-1.2" y="-5.3" width="2.4" height="3" transform="rotate(180)"/><rect x="-1.2" y="-5.3" width="2.4" height="3" transform="rotate(225)"/><rect x="-1.2" y="-5.3" width="2.4" height="3" transform="rotate(270)"/><rect x="-1.2" y="-5.3" width="2.4" height="3" transform="rotate(315)"/></g><circle r="1.5" fill="#fff"/></svg>
<div class="t" style="left:86.40px;top:255.34px;font-size:12px;color:#7a7a7a;font-weight:normal;letter-spacing:0px;transform:scaleX(1.0800);transform-origin:0 0;">39641</div>
<div style="position:absolute;left:148px;top:254.2px;width:44px;height:16.5px;background:#c5102d;border-radius:5px"></div>
<div class="t" style="left:152.30px;top:257.06px;font-size:9.5px;color:#fff;font-weight:bold;letter-spacing:0px;transform:scaleX(0.8938);transform-origin:0 0;-webkit-text-stroke:0.25px #fff;">ABERTO</div>
<div class="t" style="left:284.20px;top:255.34px;font-size:12px;color:#7a7a7a;font-weight:normal;letter-spacing:0px;transform:scaleX(1.1192);transform-origin:0 0;">13/05/2024</div>
<svg style="position:absolute;left:787px;top:251.7px" width="20" height="20" viewBox="0 0 20 20"><circle cx="10" cy="10" r="10" fill="#3bc36a"/><path d="M10 4.6a5.3 5.3 0 0 0-4.6 8l-.7 2.6 2.7-.7A5.3 5.3 0 1 0 10 4.6z" fill="none" stroke="#fff" stroke-width="1.1"/><path d="M8.1 7.3c.2-.1.5 0 .6.2l.4 1c.1.2 0 .4-.2.6l-.3.3c.4.8 1 1.4 1.8 1.8l.3-.3c.2-.2.4-.2.6-.1l1 .4c.2.1.3.4.2.6-.3.7-1 1-1.7.8-1.6-.5-2.8-1.7-3.3-3.3-.2-.7.1-1.4.6-2z" fill="#fff"/></svg>
<div class="t" style="left:929.50px;top:255.34px;font-size:12px;color:#7a7a7a;font-weight:normal;letter-spacing:0px;transform:scaleX(0.9184);transform-origin:0 0;">EMPRESA 16</div>
<div class="t" style="left:1422.50px;top:255.34px;font-size:12px;color:#7a7a7a;font-weight:normal;letter-spacing:0px;transform:scaleX(1.0141);transform-origin:0 0;">NOVO</div>
<div class="t" style="left:1792.50px;top:255.34px;font-size:12px;color:#7a7a7a;font-weight:normal;letter-spacing:0px;transform:scaleX(1.0455);transform-origin:0 0;">INDICAÇÃO</div>
<div style="position:absolute;left:12px;top:285px;width:24px;height:20px;border:1px solid #5b5470;border-radius:4px"></div>
<svg style="position:absolute;left:17.5px;top:289.5px" width="11" height="11" viewBox="-5.5 -5.5 11 11"><g fill="#5e3da6"><circle r="3.6"/><rect x="-1.2" y="-5.3" width="2.4" height="3" transform="rotate(0)"/><rect x="-1.2" y="-5.3" width="2.4" height="3" transform="rotate(45)"/><rect x="-1.2" y="-5.3" width="2.4" height="3" transform="rotate(90)"/><rect x="-1.2" y="-5.3" width="2.4" height="3" transform="rotate(135)"/><rect x="-1.2" y="-5.3" width="2.4" height="3" transform="rotate(180)"/><rect x="-1.2" y="-5.3" width="2.4" height="3" transform="rotate(225)"/><rect x="-1.2" y="-5.3" width="2.4" height="3" transform="rotate(270)"/><rect x="-1.2" y="-5.3" width="2.4" height="3" transform="rotate(315)"/></g><circle r="1.5" fill="#fff"/></svg>
<div class="t" style="left:86.40px;top:288.64px;font-size:12px;color:#7a7a7a;font-weight:normal;letter-spacing:0px;transform:scaleX(1.0800);transform-origin:0 0;">39640</div>
<div style="position:absolute;left:148px;top:287.5px;width:44px;height:16.5px;background:#c5102d;border-radius:5px"></div>
<div class="t" style="left:152.30px;top:290.36px;font-size:9.5px;color:#fff;font-weight:bold;letter-spacing:0px;transform:scaleX(0.8938);transform-origin:0 0;-webkit-text-stroke:0.25px #fff;">ABERTO</div>
<div class="t" style="left:284.20px;top:288.64px;font-size:12px;color:#7a7a7a;font-weight:normal;letter-spacing:0px;transform:scaleX(1.1192);transform-origin:0 0;">13/05/2024</div>
<svg style="position:absolute;left:787px;top:285.0px" width="20" height="20" viewBox="0 0 20 20"><circle cx="10" cy="10" r="10" fill="#3bc36a"/><path d="M10 4.6a5.3 5.3 0 0 0-4.6 8l-.7 2.6 2.7-.7A5.3 5.3 0 1 0 10 4.6z" fill="none" stroke="#fff" stroke-width="1.1"/><path d="M8.1 7.3c.2-.1.5 0 .6.2l.4 1c.1.2 0 .4-.2.6l-.3.3c.4.8 1 1.4 1.8 1.8l.3-.3c.2-.2.4-.2.6-.1l1 .4c.2.1.3.4.2.6-.3.7-1 1-1.7.8-1.6-.5-2.8-1.7-3.3-3.3-.2-.7.1-1.4.6-2z" fill="#fff"/></svg>
<div class="t" style="left:929.50px;top:288.64px;font-size:12px;color:#7a7a7a;font-weight:normal;letter-spacing:0px;transform:scaleX(0.9184);transform-origin:0 0;">EMPRESA 16</div>
<div class="t" style="left:1422.50px;top:288.64px;font-size:12px;color:#7a7a7a;font-weight:normal;letter-spacing:0px;transform:scaleX(1.0141);transform-origin:0 0;">NOVO</div>
<div class="t" style="left:1792.50px;top:288.64px;font-size:12px;color:#7a7a7a;font-weight:normal;letter-spacing:0px;transform:scaleX(1.0455);transform-origin:0 0;">INDICAÇÃO</div>
<div style="position:absolute;left:12px;top:318px;width:24px;height:20px;border:1px solid #5b5470;border-radius:4px"></div>
<svg style="position:absolute;left:17.5px;top:322.5px" width="11" height="11" viewBox="-5.5 -5.5 11 11"><g fill="#5e3da6"><circle r="3.6"/><rect x="-1.2" y="-5.3" width="2.4" height="3" transform="rotate(0)"/><rect x="-1.2" y="-5.3" width="2.4" height="3" transform="rotate(45)"/><rect x="-1.2" y="-5.3" width="2.4" height="3" transform="rotate(90)"/><rect x="-1.2" y="-5.3" width="2.4" height="3" transform="rotate(135)"/><rect x="-1.2" y="-5.3" width="2.4" height="3" transform="rotate(180)"/><rect x="-1.2" y="-5.3" width="2.4" height="3" transform="rotate(225)"/><rect x="-1.2" y="-5.3" width="2.4" height="3" transform="rotate(270)"/><rect x="-1.2" y="-5.3" width="2.4" height="3" transform="rotate(315)"/></g><circle r="1.5" fill="#fff"/></svg>
<div class="t" style="left:86.40px;top:320.84px;font-size:12px;color:#7a7a7a;font-weight:normal;letter-spacing:0px;transform:scaleX(1.0800);transform-origin:0 0;">39639</div>
<div style="position:absolute;left:148px;top:320.3px;width:58px;height:16.5px;background:#197a16;border-radius:5px"></div>
<div class="t" style="left:152.30px;top:323.16px;font-size:9.5px;color:#fff;font-weight:bold;letter-spacing:0px;transform:scaleX(0.9545);transform-origin:0 0;-webkit-text-stroke:0.25px #fff;">FATURADO</div>
<div class="t" style="left:284.20px;top:320.84px;font-size:12px;color:#7a7a7a;font-weight:normal;letter-spacing:0px;transform:scaleX(1.1192);transform-origin:0 0;">13/05/2024</div>
<div class="t" style="left:374.50px;top:320.84px;font-size:12px;color:#7a7a7a;font-weight:normal;letter-spacing:0px;transform:scaleX(0.9940);transform-origin:0 0;">À VISTA</div>
<svg style="position:absolute;left:787px;top:317.79999999999995px" width="20" height="20" viewBox="0 0 20 20"><circle cx="10" cy="10" r="10" fill="#3bc36a"/><path d="M10 4.6a5.3 5.3 0 0 0-4.6 8l-.7 2.6 2.7-.7A5.3 5.3 0 1 0 10 4.6z" fill="none" stroke="#fff" stroke-width="1.1"/><path d="M8.1 7.3c.2-.1.5 0 .6.2l.4 1c.1.2 0 .4-.2.6l-.3.3c.4.8 1 1.4 1.8 1.8l.3-.3c.2-.2.4-.2.6-.1l1 .4c.2.1.3.4.2.6-.3.7-1 1-1.7.8-1.6-.5-2.8-1.7-3.3-3.3-.2-.7.1-1.4.6-2z" fill="#fff"/></svg>
<div class="t" style="left:929.50px;top:320.84px;font-size:12px;color:#7a7a7a;font-weight:normal;letter-spacing:0px;transform:scaleX(0.9040);transform-origin:0 0;">EMPRESA 8</div>
<div class="t" style="left:1241.00px;top:320.84px;font-size:12px;color:#7a7a7a;font-weight:normal;letter-spacing:0px;transform:scaleX(0.9433);transform-origin:0 0;">XTZ 250 LANDER</div>
<div class="t" style="left:1422.50px;top:320.84px;font-size:12px;color:#7a7a7a;font-weight:normal;letter-spacing:0px;transform:scaleX(1.0141);transform-origin:0 0;">NOVO</div>
<div style="position:absolute;left:1502px;top:317.8px;width:20px;height:20px;background:#ee0a0a;border:1px solid #4a0000;border-radius:50%"></div>
<div class="t" style="left:1527.00px;top:322.84px;font-size:12px;color:#7a7a7a;font-weight:normal;letter-spacing:0px;transform:scaleX(0.9102);transform-origin:0 0;">VERMELHA</div>
<div class="t" style="left:1640.50px;top:320.84px;font-size:12px;color:#7a7a7a;font-weight:normal;letter-spacing:0px;transform:scaleX(1.0357);transform-origin:0 0;">9C6DG3320R0139586</div>
<div class="t" style="left:1792.50px;top:320.84px;font-size:12px;color:#7a7a7a;font-weight:normal;letter-spacing:0px;transform:scaleX(0.9609);transform-origin:0 0;">SHOWROOM</div>
<div style="position:absolute;left:12px;top:355px;width:24px;height:20px;border:1px solid #5b5470;border-radius:4px"></div>
<svg style="position:absolute;left:17.5px;top:359.5px" width="11" height="11" viewBox="-5.5 -5.5 11 11"><g fill="#5e3da6"><circle r="3.6"/><rect x="-1.2" y="-5.3" width="2.4" height="3" transform="rotate(0)"/><rect x="-1.2" y="-5.3" width="2.4" height="3" transform="rotate(45)"/><rect x="-1.2" y="-5.3" width="2.4" height="3" transform="rotate(90)"/><rect x="-1.2" y="-5.3" width="2.4" height="3" transform="rotate(135)"/><rect x="-1.2" y="-5.3" width="2.4" height="3" transform="rotate(180)"/><rect x="-1.2" y="-5.3" width="2.4" height="3" transform="rotate(225)"/><rect x="-1.2" y="-5.3" width="2.4" height="3" transform="rotate(270)"/><rect x="-1.2" y="-5.3" width="2.4" height="3" transform="rotate(315)"/></g><circle r="1.5" fill="#fff"/></svg>
<div class="t" style="left:86.40px;top:358.94px;font-size:12px;color:#7a7a7a;font-weight:normal;letter-spacing:0px;transform:scaleX(1.0800);transform-origin:0 0;">39638</div>
<div style="position:absolute;left:148px;top:357.8px;width:113px;height:16.5px;background:#6b3e78;border-radius:5px"></div>
<div class="t" style="left:152.30px;top:360.66px;font-size:9.5px;color:#fff;font-weight:bold;letter-spacing:0px;transform:scaleX(0.9269);transform-origin:0 0;-webkit-text-stroke:0.25px #fff;">PROPOSTA DE COMPRA</div>
<div class="t" style="left:284.20px;top:358.94px;font-size:12px;color:#7a7a7a;font-weight:normal;letter-spacing:0px;transform:scaleX(1.1192);transform-origin:0 0;">13/05/2024</div>
<div class="t" style="left:374.50px;top:358.94px;font-size:12px;color:#7a7a7a;font-weight:normal;letter-spacing:0px;transform:scaleX(0.9940);transform-origin:0 0;">À VISTA</div>
<svg style="position:absolute;left:787px;top:355.29999999999995px" width="20" height="20" viewBox="0 0 20 20"><circle cx="10" cy="10" r="10" fill="#3bc36a"/><path d="M10 4.6a5.3 5.3 0 0 0-4.6 8l-.7 2.6 2.7-.7A5.3 5.3 0 1 0 10 4.6z" fill="none" stroke="#fff" stroke-width="1.1"/><path d="M8.1 7.3c.2-.1.5 0 .6.2l.4 1c.1.2 0 .4-.2.6l-.3.3c.4.8 1 1.4 1.8 1.8l.3-.3c.2-.2.4-.2.6-.1l1 .4c.2.1.3.4.2.6-.3.7-1 1-1.7.8-1.6-.5-2.8-1.7-3.3-3.3-.2-.7.1-1.4.6-2z" fill="#fff"/></svg>
<div class="t" style="left:929.50px;top:358.94px;font-size:12px;color:#7a7a7a;font-weight:normal;letter-spacing:0px;transform:scaleX(0.9184);transform-origin:0 0;">EMPRESA 15</div>
<div class="t" style="left:1241.00px;top:358.94px;font-size:12px;color:#7a7a7a;font-weight:normal;letter-spacing:0px;transform:scaleX(0.9008);transform-origin:0 0;">FZ15 FAZER ABS</div>
<div class="t" style="left:1422.50px;top:358.94px;font-size:12px;color:#7a7a7a;font-weight:normal;letter-spacing:0px;transform:scaleX(1.0141);transform-origin:0 0;">NOVO</div>
<div style="position:absolute;left:1502px;top:355.3px;width:20px;height:20px;background:#000;border:1px solid #111;border-radius:50%"></div>
<div class="t" style="left:1527.00px;top:360.34px;font-size:12px;color:#7a7a7a;font-weight:normal;letter-spacing:0px;transform:scaleX(0.9259);transform-origin:0 0;">PRETA METÁLICA</div>
<div class="t" style="left:1640.50px;top:358.94px;font-size:12px;color:#7a7a7a;font-weight:normal;letter-spacing:0px;transform:scaleX(1.0212);transform-origin:0 0;">9C6RG7710R0052655</div>
<div class="t" style="left:1792.50px;top:358.94px;font-size:12px;color:#7a7a7a;font-weight:normal;letter-spacing:0px;transform:scaleX(1.0192);transform-origin:0 0;">Passante</div>
<div style="position:absolute;left:12px;top:393px;width:24px;height:20px;border:1px solid #5b5470;border-radius:4px"></div>
<svg style="position:absolute;left:17.5px;top:397.5px" width="11" height="11" viewBox="-5.5 -5.5 11 11"><g fill="#5e3da6"><circle r="3.6"/><rect x="-1.2" y="-5.3" width="2.4" height="3" transform="rotate(0)"/><rect x="-1.2" y="-5.3" width="2.4" height="3" transform="rotate(45)"/><rect x="-1.2" y="-5.3" width="2.4" height="3" transform="rotate(90)"/><rect x="-1.2" y="-5.3" width="2.4" height="3" transform="rotate(135)"/><rect x="-1.2" y="-5.3" width="2.4" height="3" transform="rotate(180)"/><rect x="-1.2" y="-5.3" width="2.4" height="3" transform="rotate(225)"/><rect x="-1.2" y="-5.3" width="2.4" height="3" transform="rotate(270)"/><rect x="-1.2" y="-5.3" width="2.4" height="3" transform="rotate(315)"/></g><circle r="1.5" fill="#fff"/></svg>
<div class="t" style="left:86.40px;top:395.94px;font-size:12px;color:#7a7a7a;font-weight:normal;letter-spacing:0px;transform:scaleX(1.0800);transform-origin:0 0;">39637</div>
<div style="position:absolute;left:148px;top:394.8px;width:44px;height:16.5px;background:#c5102d;border-radius:5px"></div>
<div class="t" style="left:152.30px;top:397.66px;font-size:9.5px;color:#fff;font-weight:bold;letter-spacing:0px;transform:scaleX(0.8938);transform-origin:0 0;-webkit-text-stroke:0.25px #fff;">ABERTO</div>
<div class="t" style="left:284.20px;top:395.94px;font-size:12px;color:#7a7a7a;font-weight:normal;letter-spacing:0px;transform:scaleX(1.1192);transform-origin:0 0;">13/05/2024</div>
<svg style="position:absolute;left:787px;top:392.29999999999995px" width="20" height="20" viewBox="0 0 20 20"><circle cx="10" cy="10" r="10" fill="#3bc36a"/><path d="M10 4.6a5.3 5.3 0 0 0-4.6 8l-.7 2.6 2.7-.7A5.3 5.3 0 1 0 10 4.6z" fill="none" stroke="#fff" stroke-width="1.1"/><path d="M8.1 7.3c.2-.1.5 0 .6.2l.4 1c.1.2 0 .4-.2.6l-.3.3c.4.8 1 1.4 1.8 1.8l.3-.3c.2-.2.4-.2.6-.1l1 .4c.2.1.3.4.2.6-.3.7-1 1-1.7.8-1.6-.5-2.8-1.7-3.3-3.3-.2-.7.1-1.4.6-2z" fill="#fff"/></svg>
<div class="t" style="left:929.50px;top:395.94px;font-size:12px;color:#7a7a7a;font-weight:normal;letter-spacing:0px;transform:scaleX(0.9295);transform-origin:0 0;">EMPRESA 11</div>
<div class="t" style="left:1241.00px;top:395.94px;font-size:12px;color:#7a7a7a;font-weight:normal;letter-spacing:0px;transform:scaleX(0.9433);transform-origin:0 0;">XTZ 250 LANDER</div>
<div class="t" style="left:1422.50px;top:395.94px;font-size:12px;color:#7a7a7a;font-weight:normal;letter-spacing:0px;transform:scaleX(1.0141);transform-origin:0 0;">NOVO</div>
<div style="position:absolute;left:1502px;top:392.3px;width:20px;height:20px;background:#0a22ee;border:1px solid #111;border-radius:50%"></div>
<div class="t" style="left:1527.00px;top:397.34px;font-size:12px;color:#7a7a7a;font-weight:normal;letter-spacing:0px;transform:scaleX(0.9227);transform-origin:0 0;">AZUL</div>
<div class="t" style="left:1792.50px;top:395.94px;font-size:12px;color:#7a7a7a;font-weight:normal;letter-spacing:0px;transform:scaleX(0.9679);transform-origin:0 0;">INSTAGRAM</div>
<div style="position:absolute;left:12px;top:429px;width:24px;height:20px;border:1px solid #5b5470;border-radius:4px"></div>
<svg style="position:absolute;left:17.5px;top:433.5px" width="11" height="11" viewBox="-5.5 -5.5 11 11"><g fill="#5e3da6"><circle r="3.6"/><rect x="-1.2" y="-5.3" width="2.4" height="3" transform="rotate(0)"/><rect x="-1.2" y="-5.3" width="2.4" height="3" transform="rotate(45)"/><rect x="-1.2" y="-5.3" width="2.4" height="3" transform="rotate(90)"/><rect x="-1.2" y="-5.3" width="2.4" height="3" transform="rotate(135)"/><rect x="-1.2" y="-5.3" width="2.4" height="3" transform="rotate(180)"/><rect x="-1.2" y="-5.3" width="2.4" height="3" transform="rotate(225)"/><rect x="-1.2" y="-5.3" width="2.4" height="3" transform="rotate(270)"/><rect x="-1.2" y="-5.3" width="2.4" height="3" transform="rotate(315)"/></g><circle r="1.5" fill="#fff"/></svg>
<div class="t" style="left:86.40px;top:432.94px;font-size:12px;color:#7a7a7a;font-weight:normal;letter-spacing:0px;transform:scaleX(1.0800);transform-origin:0 0;">39636</div>
<div style="position:absolute;left:148px;top:431.8px;width:113px;height:16.5px;background:#6b3e78;border-radius:5px"></div>
<div class="t" style="left:152.30px;top:434.66px;font-size:9.5px;color:#fff;font-weight:bold;letter-spacing:0px;transform:scaleX(0.9269);transform-origin:0 0;-webkit-text-stroke:0.25px #fff;">PROPOSTA DE COMPRA</div>
<div class="t" style="left:284.20px;top:432.94px;font-size:12px;color:#7a7a7a;font-weight:normal;letter-spacing:0px;transform:scaleX(1.1192);transform-origin:0 0;">13/05/2024</div>
<div class="t" style="left:374.50px;top:432.94px;font-size:12px;color:#7a7a7a;font-weight:normal;letter-spacing:0px;transform:scaleX(0.9859);transform-origin:0 0;">FINANCIAMENTO</div>
<svg style="position:absolute;left:787px;top:429.29999999999995px" width="20" height="20" viewBox="0 0 20 20"><circle cx="10" cy="10" r="10" fill="#3bc36a"/><path d="M10 4.6a5.3 5.3 0 0 0-4.6 8l-.7 2.6 2.7-.7A5.3 5.3 0 1 0 10 4.6z" fill="none" stroke="#fff" stroke-width="1.1"/><path d="M8.1 7.3c.2-.1.5 0 .6.2l.4 1c.1.2 0 .4-.2.6l-.3.3c.4.8 1 1.4 1.8 1.8l.3-.3c.2-.2.4-.2.6-.1l1 .4c.2.1.3.4.2.6-.3.7-1 1-1.7.8-1.6-.5-2.8-1.7-3.3-3.3-.2-.7.1-1.4.6-2z" fill="#fff"/></svg>
<div class="t" style="left:929.50px;top:432.94px;font-size:12px;color:#7a7a7a;font-weight:normal;letter-spacing:0px;transform:scaleX(0.9184);transform-origin:0 0;">EMPRESA 14</div>
<div class="t" style="left:1241.00px;top:432.94px;font-size:12px;color:#7a7a7a;font-weight:normal;letter-spacing:0px;transform:scaleX(0.9147);transform-origin:0 0;">CROSSER 150 S ABS</div>
<div class="t" style="left:1422.50px;top:432.94px;font-size:12px;color:#7a7a7a;font-weight:normal;letter-spacing:0px;transform:scaleX(1.0141);transform-origin:0 0;">NOVO</div>
<div style="position:absolute;left:1502px;top:429.3px;width:20px;height:20px;background:#000;border:1px solid #111;border-radius:50%"></div>
<div class="t" style="left:1527.00px;top:434.34px;font-size:12px;color:#7a7a7a;font-weight:normal;letter-spacing:0px;transform:scaleX(0.8678);transform-origin:0 0;">PRETA</div>
<div class="t" style="left:1640.50px;top:432.94px;font-size:12px;color:#7a7a7a;font-weight:normal;letter-spacing:0px;transform:scaleX(1.0317);transform-origin:0 0;">9C6DG25D0R0029361</div>
<div class="t" style="left:1792.50px;top:432.94px;font-size:12px;color:#7a7a7a;font-weight:normal;letter-spacing:0px;transform:scaleX(0.9609);transform-origin:0 0;">SHOWROOM</div>
<div style="position:absolute;left:12px;top:467px;width:24px;height:20px;border:1px solid #5b5470;border-radius:4px"></div>
<svg style="position:absolute;left:17.5px;top:471.5px" width="11" height="11" viewBox="-5.5 -5.5 11 11"><g fill="#5e3da6"><circle r="3.6"/><rect x="-1.2" y="-5.3" width="2.4" height="3" transform="rotate(0)"/><rect x="-1.2" y="-5.3" width="2.4" height="3" transform="rotate(45)"/><rect x="-1.2" y="-5.3" width="2.4" height="3" transform="rotate(90)"/><rect x="-1.2" y="-5.3" width="2.4" height="3" transform="rotate(135)"/><rect x="-1.2" y="-5.3" width="2.4" height="3" transform="rotate(180)"/><rect x="-1.2" y="-5.3" width="2.4" height="3" transform="rotate(225)"/><rect x="-1.2" y="-5.3" width="2.4" height="3" transform="rotate(270)"/><rect x="-1.2" y="-5.3" width="2.4" height="3" transform="rotate(315)"/></g><circle r="1.5" fill="#fff"/></svg>
<div class="t" style="left:86.40px;top:470.64px;font-size:12px;color:#7a7a7a;font-weight:normal;letter-spacing:0px;transform:scaleX(1.0800);transform-origin:0 0;">39635</div>
<div style="position:absolute;left:148px;top:469.5px;width:44px;height:16.5px;background:#c5102d;border-radius:5px"></div>
<div class="t" style="left:152.30px;top:472.36px;font-size:9.5px;color:#fff;font-weight:bold;letter-spacing:0px;transform:scaleX(0.8938);transform-origin:0 0;-webkit-text-stroke:0.25px #fff;">ABERTO</div>
<div class="t" style="left:284.20px;top:470.64px;font-size:12px;color:#7a7a7a;font-weight:normal;letter-spacing:0px;transform:scaleX(1.1192);transform-origin:0 0;">13/05/2024</div>
<div class="t" style="left:374.50px;top:470.64px;font-size:12px;color:#7a7a7a;font-weight:normal;letter-spacing:0px;transform:scaleX(0.9777);transform-origin:0 0;">CONSÓRCIO</div>
<svg style="position:absolute;left:787px;top:467.0px" width="20" height="20" viewBox="0 0 20 20"><circle cx="10" cy="10" r="10" fill="#3bc36a"/><path d="M10 4.6a5.3 5.3 0 0 0-4.6 8l-.7 2.6 2.7-.7A5.3 5.3 0 1 0 10 4.6z" fill="none" stroke="#fff" stroke-width="1.1"/><path d="M8.1 7.3c.2-.1.5 0 .6.2l.4 1c.1.2 0 .4-.2.6l-.3.3c.4.8 1 1.4 1.8 1.8l.3-.3c.2-.2.4-.2.6-.1l1 .4c.2.1.3.4.2.6-.3.7-1 1-1.7.8-1.6-.5-2.8-1.7-3.3-3.3-.2-.7.1-1.4.6-2z" fill="#fff"/></svg>
<div class="t" style="left:929.50px;top:470.64px;font-size:12px;color:#7a7a7a;font-weight:normal;letter-spacing:0px;transform:scaleX(0.9040);transform-origin:0 0;">EMPRESA 2</div>
<div class="t" style="left:1241.00px;top:470.64px;font-size:12px;color:#7a7a7a;font-weight:normal;letter-spacing:0px;transform:scaleX(0.9154);transform-origin:0 0;">CROSSER 150 Z ABS</div>
<div class="t" style="left:1422.50px;top:470.64px;font-size:12px;color:#7a7a7a;font-weight:normal;letter-spacing:0px;transform:scaleX(1.0141);transform-origin:0 0;">NOVO</div>
<div style="position:absolute;left:1502px;top:467.0px;width:20px;height:20px;background:#e2d9d5;border:1px solid #111;border-radius:50%"></div>
<div class="t" style="left:1527.00px;top:472.04px;font-size:12px;color:#7a7a7a;font-weight:normal;letter-spacing:0px;transform:scaleX(0.8674);transform-origin:0 0;">BEGE</div>
<div class="t" style="left:1792.50px;top:470.64px;font-size:12px;color:#7a7a7a;font-weight:normal;letter-spacing:0px;transform:scaleX(0.9242);transform-origin:0 0;">WHATSAPP</div>
<div style="position:absolute;left:12px;top:505px;width:24px;height:20px;border:1px solid #5b5470;border-radius:4px"></div>
<svg style="position:absolute;left:17.5px;top:509.5px" width="11" height="11" viewBox="-5.5 -5.5 11 11"><g fill="#5e3da6"><circle r="3.6"/><rect x="-1.2" y="-5.3" width="2.4" height="3" transform="rotate(0)"/><rect x="-1.2" y="-5.3" width="2.4" height="3" transform="rotate(45)"/><rect x="-1.2" y="-5.3" width="2.4" height="3" transform="rotate(90)"/><rect x="-1.2" y="-5.3" width="2.4" height="3" transform="rotate(135)"/><rect x="-1.2" y="-5.3" width="2.4" height="3" transform="rotate(180)"/><rect x="-1.2" y="-5.3" width="2.4" height="3" transform="rotate(225)"/><rect x="-1.2" y="-5.3" width="2.4" height="3" transform="rotate(270)"/><rect x="-1.2" y="-5.3" width="2.4" height="3" transform="rotate(315)"/></g><circle r="1.5" fill="#fff"/></svg>
<div class="t" style="left:86.40px;top:507.94px;font-size:12px;color:#7a7a7a;font-weight:normal;letter-spacing:0px;transform:scaleX(1.0800);transform-origin:0 0;">39634</div>
<div style="position:absolute;left:148px;top:506.8px;width:49px;height:16.5px;background:#7ccf35;border-radius:5px"></div>
<div class="t" style="left:152.30px;top:509.66px;font-size:9.5px;color:#fff;font-weight:bold;letter-spacing:0px;transform:scaleX(0.9519);transform-origin:0 0;-webkit-text-stroke:0.25px #fff;">VENDIDA</div>
<div class="t" style="left:284.20px;top:507.94px;font-size:12px;color:#7a7a7a;font-weight:normal;letter-spacing:0px;transform:scaleX(1.1192);transform-origin:0 0;">13/05/2024</div>
<div class="t" style="left:374.50px;top:507.94px;font-size:12px;color:#7a7a7a;font-weight:normal;letter-spacing:0px;transform:scaleX(0.9777);transform-origin:0 0;">CONSÓRCIO</div>
<svg style="position:absolute;left:787px;top:504.29999999999995px" width="20" height="20" viewBox="0 0 20 20"><circle cx="10" cy="10" r="10" fill="#3bc36a"/><path d="M10 4.6a5.3 5.3 0 0 0-4.6 8l-.7 2.6 2.7-.7A5.3 5.3 0 1 0 10 4.6z" fill="none" stroke="#fff" stroke-width="1.1"/><path d="M8.1 7.3c.2-.1.5 0 .6.2l.4 1c.1.2 0 .4-.2.6l-.3.3c.4.8 1 1.4 1.8 1.8l.3-.3c.2-.2.4-.2.6-.1l1 .4c.2.1.3.4.2.6-.3.7-1 1-1.7.8-1.6-.5-2.8-1.7-3.3-3.3-.2-.7.1-1.4.6-2z" fill="#fff"/></svg>
<div class="t" style="left:929.50px;top:507.94px;font-size:12px;color:#7a7a7a;font-weight:normal;letter-spacing:0px;transform:scaleX(0.9040);transform-origin:0 0;">EMPRESA 3</div>
<div class="t" style="left:1241.00px;top:507.94px;font-size:12px;color:#7a7a7a;font-weight:normal;letter-spacing:0px;transform:scaleX(0.9697);transform-origin:0 0;">NMAX CONNECTED 160 ABS</div>
<div class="t" style="left:1422.50px;top:507.94px;font-size:12px;color:#7a7a7a;font-weight:normal;letter-spacing:0px;transform:scaleX(1.0141);transform-origin:0 0;">NOVO</div>
<div style="position:absolute;left:1502px;top:504.3px;width:20px;height:20px;background:#000;border:1px solid #111;border-radius:50%"></div>
<div class="t" style="left:1527.00px;top:509.34px;font-size:12px;color:#7a7a7a;font-weight:normal;letter-spacing:0px;transform:scaleX(0.9105);transform-origin:0 0;">PRETA FOSCA</div>
<div class="t" style="left:1792.50px;top:507.94px;font-size:12px;color:#7a7a7a;font-weight:normal;letter-spacing:0px;transform:scaleX(0.9679);transform-origin:0 0;">INSTAGRAM</div>
<div style="position:absolute;left:12px;top:542px;width:24px;height:20px;border:1px solid #5b5470;border-radius:4px"></div>
<svg style="position:absolute;left:17.5px;top:546.5px" width="11" height="11" viewBox="-5.5 -5.5 11 11"><g fill="#5e3da6"><circle r="3.6"/><rect x="-1.2" y="-5.3" width="2.4" height="3" transform="rotate(0)"/><rect x="-1.2" y="-5.3" width="2.4" height="3" transform="rotate(45)"/><rect x="-1.2" y="-5.3" width="2.4" height="3" transform="rotate(90)"/><rect x="-1.2" y="-5.3" width="2.4" height="3" transform="rotate(135)"/><rect x="-1.2" y="-5.3" width="2.4" height="3" transform="rotate(180)"/><rect x="-1.2" y="-5.3" width="2.4" height="3" transform="rotate(225)"/><rect x="-1.2" y="-5.3" width="2.4" height="3" transform="rotate(270)"/><rect x="-1.2" y="-5.3" width="2.4" height="3" transform="rotate(315)"/></g><circle r="1.5" fill="#fff"/></svg>
<div class="t" style="left:86.40px;top:545.14px;font-size:12px;color:#7a7a7a;font-weight:normal;letter-spacing:0px;transform:scaleX(1.0800);transform-origin:0 0;">39633</div>
<div style="position:absolute;left:148px;top:544.0px;width:44px;height:16.5px;background:#c5102d;border-radius:5px"></div>
<div class="t" style="left:152.30px;top:546.86px;font-size:9.5px;color:#fff;font-weight:bold;letter-spacing:0px;transform:scaleX(0.8938);transform-origin:0 0;-webkit-text-stroke:0.25px #fff;">ABERTO</div>
<div class="t" style="left:284.20px;top:545.14px;font-size:12px;color:#7a7a7a;font-weight:normal;letter-spacing:0px;transform:scaleX(1.1192);transform-origin:0 0;">13/05/2024</div>
<svg style="position:absolute;left:787px;top:541.5px" width="20" height="20" viewBox="0 0 20 20"><circle cx="10" cy="10" r="10" fill="#3bc36a"/><path d="M10 4.6a5.3 5.3 0 0 0-4.6 8l-.7 2.6 2.7-.7A5.3 5.3 0 1 0 10 4.6z" fill="none" stroke="#fff" stroke-width="1.1"/><path d="M8.1 7.3c.2-.1.5 0 .6.2l.4 1c.1.2 0 .4-.2.6l-.3.3c.4.8 1 1.4 1.8 1.8l.3-.3c.2-.2.4-.2.6-.1l1 .4c.2.1.3.4.2.6-.3.7-1 1-1.7.8-1.6-.5-2.8-1.7-3.3-3.3-.2-.7.1-1.4.6-2z" fill="#fff"/></svg>
<div class="t" style="left:929.50px;top:545.14px;font-size:12px;color:#7a7a7a;font-weight:normal;letter-spacing:0px;transform:scaleX(0.9040);transform-origin:0 0;">EMPRESA 1</div>
<div class="t" style="left:1422.50px;top:545.14px;font-size:12px;color:#7a7a7a;font-weight:normal;letter-spacing:0px;transform:scaleX(1.0141);transform-origin:0 0;">NOVO</div>
<div class="t" style="left:1792.50px;top:545.14px;font-size:12px;color:#7a7a7a;font-weight:normal;letter-spacing:0px;transform:scaleX(1.0455);transform-origin:0 0;">INDICAÇÃO</div>
</div>
<div style="position:absolute;left:1871px;top:235px;width:17px;height:583px;background:#f1f1f1"></div>
<div style="position:absolute;left:1873px;top:269px;width:13px;height:531px;background:#c1c1c1"></div>
<svg style="position:absolute;left:1875px;top:240px" width="9" height="6" viewBox="0 0 9 6"><path d="M0.5 5 L4.5 1 L8.5 5Z" fill="#505050"/></svg>
<svg style="position:absolute;left:1875px;top:806px" width="9" height="6" viewBox="0 0 9 6"><path d="M0.5 1 L4.5 5 L8.5 1Z" fill="#505050"/></svg>
<div style="position:absolute;left:32px;top:818px;width:1839px;height:17px;background:#f1f1f1"></div>
<div style="position:absolute;left:49px;top:820px;width:1703px;height:13px;background:#c1c1c1"></div>
<svg style="position:absolute;left:36px;top:822px" width="6" height="9" viewBox="0 0 6 9"><path d="M5 0.5 L1 4.5 L5 8.5Z" fill="#a3a3a3"/></svg>
<svg style="position:absolute;left:1860px;top:822px" width="6" height="9" viewBox="0 0 6 9"><path d="M1 0.5 L5 4.5 L1 8.5Z" fill="#505050"/></svg>
<div style="position:absolute;left:1871px;top:818px;width:17px;height:17px;background:#dcdcdc"></div>
<div style="position:absolute;top:843px;height:28px;border:1px solid #eceef0;color:#222;border-radius:5px 0 0 5px;left:32.0px;width:21.4px;font-size:13px;text-align:center;line-height:27px;font-family:"Liberation Sans", sans-serif">‹</div>
<div style="position:absolute;top:843px;height:28px;border:1px solid #eceef0;color:#222;left:52.4px;width:21.9px;font-size:13px;text-align:center;line-height:27px;font-family:"Liberation Sans", sans-serif">1</div>
<div style="position:absolute;top:843px;height:28px;border:1px solid #eceef0;color:#222;left:73.3px;width:25.1px;font-size:13px;text-align:center;line-height:27px;font-family:"Liberation Sans", sans-serif">2</div>
<div style="position:absolute;top:843px;height:28px;border:1px solid #555;border-right-color:#eceef0;color:#444;left:97.4px;width:25.6px;font-size:9px;text-align:center;line-height:30px;font-family:"Liberation Sans", sans-serif">…</div>
<div style="position:absolute;top:843px;height:28px;border:1px solid #eceef0;color:#222;left:122.0px;width:25.3px;font-size:13px;text-align:center;line-height:27px;font-family:"Liberation Sans", sans-serif">5</div>
<div style="position:absolute;top:843px;height:28px;border:1px solid #eceef0;color:#222;left:146.3px;width:26.0px;font-size:13px;text-align:center;line-height:27px;font-family:"Liberation Sans", sans-serif">6</div>
<div style="position:absolute;top:843px;height:28px;border:1px solid #eceef0;color:#222;left:171.3px;width:23.9px;font-size:13px;text-align:center;line-height:27px;font-family:"Liberation Sans", sans-serif">7</div>
<div style="position:absolute;top:843px;height:28px;background:#6f42c1;color:#fff;left:194.2px;width:26.8px;font-size:13px;text-align:center;line-height:27px;font-family:"Liberation Sans", sans-serif">8</div>
<div style="position:absolute;top:843px;height:28px;border:1px solid #eceef0;color:#222;left:220.0px;width:25.7px;font-size:13px;text-align:center;line-height:27px;font-family:"Liberation Sans", sans-serif">9</div>
<div style="position:absolute;top:843px;height:28px;border:1px solid #eceef0;color:#222;left:244.7px;width:28.8px;font-size:13px;text-align:center;line-height:27px;font-family:"Liberation Sans", sans-serif">10</div>
<div style="position:absolute;top:843px;height:28px;border:1px solid #eceef0;color:#222;left:272.5px;width:25.7px;font-size:13px;text-align:center;line-height:27px;font-family:"Liberation Sans", sans-serif">11</div>
<div style="position:absolute;top:843px;height:28px;border:1px solid #555;border-right-color:#eceef0;color:#444;left:297.2px;width:25.0px;font-size:9px;text-align:center;line-height:30px;font-family:"Liberation Sans", sans-serif">…</div>
<div style="position:absolute;top:843px;height:28px;border:1px solid #eceef0;color:#222;left:321.2px;width:48.1px;font-size:13px;text-align:center;line-height:27px;font-family:"Liberation Sans", sans-serif">2509</div>
<div style="position:absolute;top:843px;height:28px;border:1px solid #eceef0;color:#222;left:368.3px;width:44.4px;font-size:13px;text-align:center;line-height:27px;font-family:"Liberation Sans", sans-serif">2510</div>
<div style="position:absolute;top:843px;height:28px;border:1px solid #eceef0;color:#222;border-radius:0 5px 5px 0;left:411.7px;width:20.1px;font-size:13px;text-align:center;line-height:27px;font-family:"Liberation Sans", sans-serif">›</div>
<div class="t" style="left:32.60px;top:883.26px;font-size:16px;color:#6e6e6e;font-weight:normal;letter-spacing:0.2px;">Total 37641</div></body></html>
